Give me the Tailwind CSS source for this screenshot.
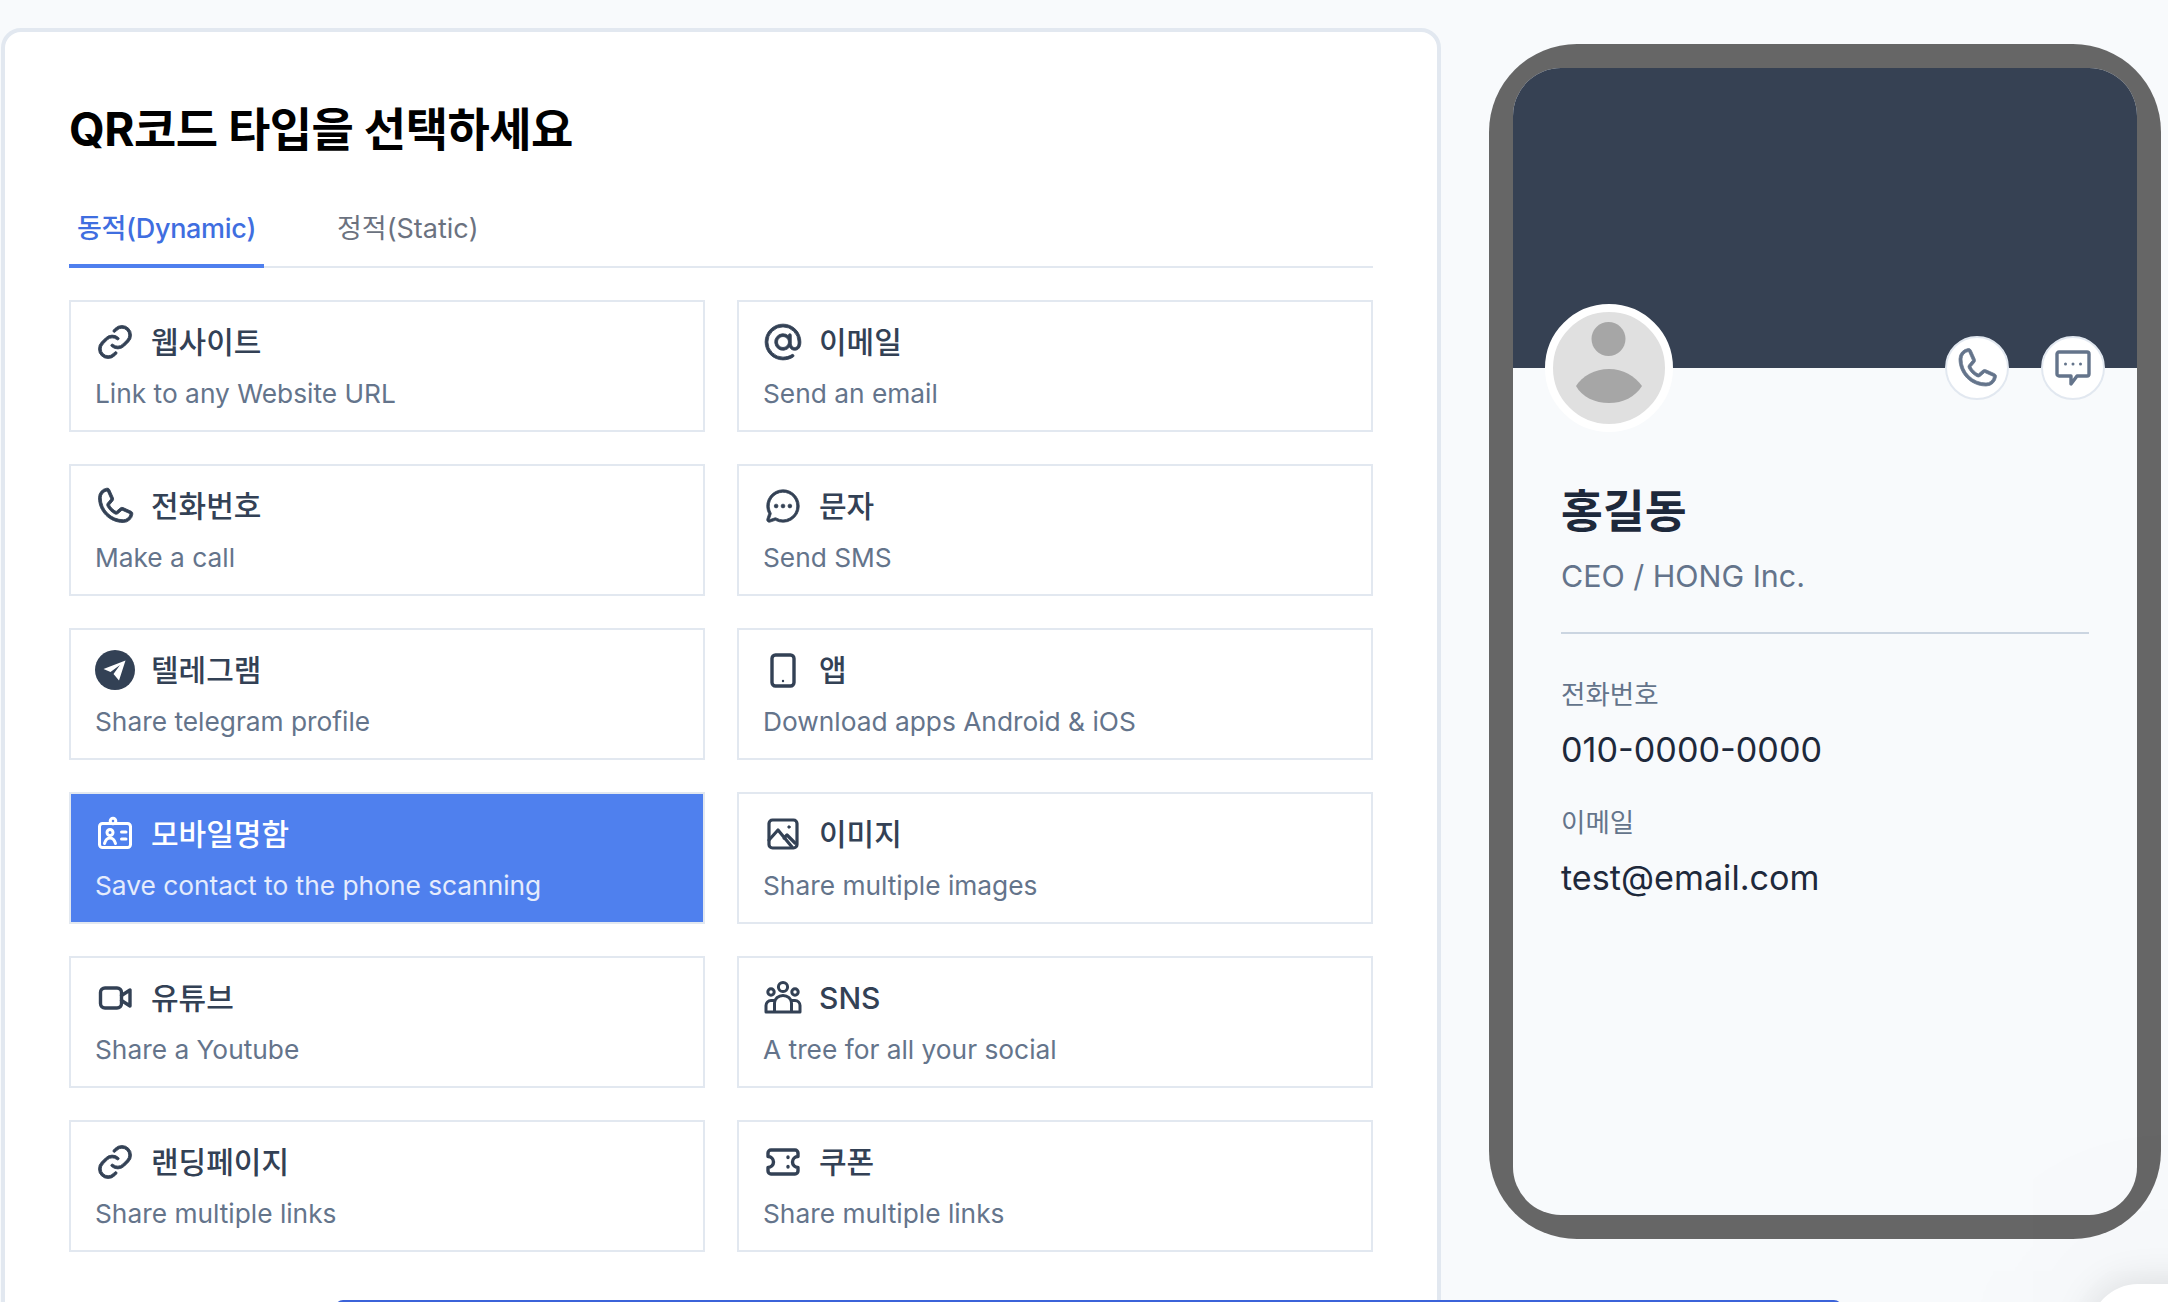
<!DOCTYPE html>
<html lang="ko">
<head>
<meta charset="UTF-8">
<title>QR코드 타입 선택</title>
<script src="https://cdn.jsdelivr.net/npm/@tailwindcss/browser@4"></script>
</head>
<body class="relative h-[1302px] w-[2168px] overflow-hidden bg-[#f8fafc] font-['Inter','Noto_Sans_CJK_KR',sans-serif]">
<div class="flex items-start pl-px">
  <!-- type selector -->
  <main class="mt-7 h-[1400px] w-[1440px] shrink-0 rounded-[20px] border-4 border-[#e2e8f0] bg-white px-16 pt-[69px]">
    <h1 class="text-[46px] leading-[56px] font-bold text-black tracking-[-0.5px]">QR코드 타입을 선택하세요</h1>
    <div class="mt-[41px] flex h-[70px] gap-[65px] border-b-2 border-[#e2e8f0]">
      <button class="-mb-0.5 h-[70px] w-[195px] border-b-4 border-[#4f7fee] px-2 pb-1 text-left text-[27px] font-medium tracking-[-0.3px] whitespace-nowrap text-[#3f6ee0]">동적(Dynamic)</button>
      <button class="-mb-0.5 h-[70px] px-2 pb-2 text-[27px] whitespace-nowrap text-[#6b7280]">정적(Static)</button>
    </div>
    <div class="mt-8 grid grid-cols-2 gap-8">
      <a class="flex h-[132px] flex-col border-2 border-[#e2e8f0] px-6 pt-5">
        <div class="flex h-10 items-center gap-4 text-[30px] font-medium text-[#334155]">
          <svg class="-mx-0.5 size-11" viewBox="0 0 256 256" fill="#334155" stroke="#334155" stroke-width="5"><path d="M137.54,186.36a8,8,0,0,1,0,11.31l-9.94,10A56,56,0,0,1,48.38,128.4L72.5,104.28A56,56,0,0,1,149.31,102a8,8,0,1,1-10.64,12,40,40,0,0,0-54.85,1.63L59.7,139.72a40,40,0,0,0,56.58,56.58l9.94-9.94A8,8,0,0,1,137.54,186.36Zm70.08-138a56.08,56.08,0,0,0-79.22,0l-9.94,9.95a8,8,0,0,0,11.32,11.31l9.94-9.94a40,40,0,0,1,56.58,56.58L172.18,140.4A40,40,0,0,1,117.33,142,8,8,0,1,0,106.69,154a56,56,0,0,0,76.81-2.26l24.12-24.12A56.08,56.08,0,0,0,207.62,48.38Z"/></svg>
          웹사이트
        </div>
        <p class="mt-[14px] text-[26.3px] leading-9 text-[#64748b]">Link to any Website URL</p>
      </a>
      <a class="flex h-[132px] flex-col border-2 border-[#e2e8f0] px-6 pt-5">
        <div class="flex h-10 items-center gap-4 text-[30px] font-medium text-[#334155]">
          <svg class="-mx-0.5 size-11" viewBox="0 0 256 256" fill="#334155" stroke="#334155" stroke-width="5"><path d="M128,24a104,104,0,0,0,0,208c21.51,0,44.1-6.48,60.43-17.33a8,8,0,0,0-8.86-13.33C166,210.38,146.21,216,128,216a88,88,0,1,1,88-88c0,26.45-10.88,32-20,32s-20-5.55-20-32V88a8,8,0,0,0-16,0v4.26a48,48,0,1,0,5.93,65.1c6,12,16.35,18.64,30.07,18.64,22.54,0,36-17.94,36-48A104.11,104.11,0,0,0,128,24Zm0,136a32,32,0,1,1,32-32A32,32,0,0,1,128,160Z"/></svg>
          이메일
        </div>
        <p class="mt-[14px] text-[26.3px] leading-9 text-[#64748b]">Send an email</p>
      </a>
      <a class="flex h-[132px] flex-col border-2 border-[#e2e8f0] px-6 pt-5">
        <div class="flex h-10 items-center gap-4 text-[30px] font-medium text-[#334155]">
          <svg class="-mx-0.5 size-11" viewBox="0 0 256 256" fill="#334155" stroke="#334155" stroke-width="5"><path d="M222.37,158.46l-47.11-21.11-.13-.06a16,16,0,0,0-15.17,1.4,8.12,8.12,0,0,0-.75.56L134.87,160c-15.42-7.49-31.34-23.29-38.83-38.51l20.78-24.71c.2-.25.39-.5.57-.77a16,16,0,0,0,1.32-15.06l0-.12L97.54,33.64a16,16,0,0,0-16.62-9.52A56.26,56.26,0,0,0,32,80c0,79.4,64.6,144,144,144a56.26,56.26,0,0,0,55.88-48.92A16,16,0,0,0,222.37,158.46ZM176,208A128.14,128.14,0,0,1,48,80,40.2,40.2,0,0,1,82.87,40a.61.61,0,0,0,0,.12l21,47L83.2,111.86a6.13,6.13,0,0,0-.57.77,16,16,0,0,0-1,15.7c9.06,18.53,27.73,37.06,46.46,46.11a16,16,0,0,0,15.75-1.14,8.44,8.44,0,0,0,.74-.56L168.89,152l47,21.05h0s.08,0,.11,0A40.21,40.21,0,0,1,176,208Z"/></svg>
          전화번호
        </div>
        <p class="mt-[14px] text-[26.3px] leading-9 text-[#64748b]">Make a call</p>
      </a>
      <a class="flex h-[132px] flex-col border-2 border-[#e2e8f0] px-6 pt-5">
        <div class="flex h-10 items-center gap-4 text-[30px] font-medium text-[#334155]">
          <svg class="size-10" viewBox="0 0 256 256" fill="#334155" stroke="#334155" stroke-width="5"><path d="M140,128a12,12,0,1,1-12-12A12,12,0,0,1,140,128ZM84,116a12,12,0,1,0,12,12A12,12,0,0,0,84,116Zm88,0a12,12,0,1,0,12,12A12,12,0,0,0,172,116Zm60,12A104,104,0,0,1,79.12,219.82L45.07,231.17a16,16,0,0,1-20.24-20.24l11.35-34.05A104,104,0,1,1,232,128Zm-16,0A88,88,0,1,0,51.81,172.06a8,8,0,0,1,.66,6.54L40,216,77.4,203.53a7.85,7.85,0,0,1,2.53-.42,8,8,0,0,1,4,1.08A88,88,0,0,0,216,128Z"/></svg>
          문자
        </div>
        <p class="mt-[14px] text-[26.3px] leading-9 text-[#64748b]">Send SMS</p>
      </a>
      <a class="flex h-[132px] flex-col border-2 border-[#e2e8f0] px-6 pt-5">
        <div class="flex h-10 items-center gap-4 text-[30px] font-medium text-[#334155]">
          <svg class="size-10" viewBox="0 0 40 40"><circle cx="20" cy="20" r="20" fill="#334155"/><path d="M30.5 10.5 8.5 19l7 3 9.5-7-6.5 9 5.5 6.5z" fill="#fff"/></svg>
          텔레그램
        </div>
        <p class="mt-[14px] text-[26.3px] leading-9 text-[#64748b]">Share telegram profile</p>
      </a>
      <a class="flex h-[132px] flex-col border-2 border-[#e2e8f0] px-6 pt-5">
        <div class="flex h-10 items-center gap-4 text-[30px] font-medium text-[#334155]">
          <svg class="size-10" viewBox="0 0 40 40" fill="none" stroke="#334155" stroke-width="3.4"><rect x="9" y="5" width="22" height="31" rx="3.5"/><circle cx="20" cy="31" r="1.2" fill="#334155" stroke="none"/></svg>
          앱
        </div>
        <p class="mt-[14px] text-[26.3px] leading-9 text-[#64748b]">Download apps Android &amp; iOS</p>
      </a>
      <a class="flex h-[132px] flex-col border-2 border-[#e2e8f0] bg-[#4f80ee] px-6 pt-5">
        <div class="flex h-10 items-center gap-4 text-[30px] font-medium text-white">
          <svg class="size-10" viewBox="0 0 40 40" fill="none" stroke="#fff" stroke-width="3" stroke-linejoin="round" stroke-linecap="round"><rect x="4.5" y="9.5" width="31" height="24" rx="3"/><circle cx="18" cy="7" r="2.8" fill="#4f80ee"/><circle cx="15" cy="18.5" r="3"/><path d="M9.5 29.5c1-3.5 3-5.5 5.5-5.5s4.5 2 5.5 5.5M26.5 18h4.5M26.5 25h4.5"/></svg>
          모바일명함
        </div>
        <p class="mt-[14px] text-[26.3px] leading-9 text-white/85">Save contact to the phone scanning</p>
      </a>
      <a class="flex h-[132px] flex-col border-2 border-[#e2e8f0] px-6 pt-5">
        <div class="flex h-10 items-center gap-4 text-[30px] font-medium text-[#334155]">
          <svg class="size-10" viewBox="0 0 40 40" fill="none" stroke="#334155" stroke-width="3.2" stroke-linejoin="round" stroke-linecap="round"><rect x="6" y="6" width="28" height="28" rx="3.5"/><circle cx="26" cy="13" r="1.2" fill="#334155" stroke-width="1"/><path d="M6 26 15 16l14 17M21 24l3-3 8 8"/></svg>
          이미지
        </div>
        <p class="mt-[14px] text-[26.3px] leading-9 text-[#64748b]">Share multiple images</p>
      </a>
      <a class="flex h-[132px] flex-col border-2 border-[#e2e8f0] px-6 pt-5">
        <div class="flex h-10 items-center gap-4 text-[30px] font-medium text-[#334155]">
          <svg class="size-10" viewBox="0 0 40 40" fill="none" stroke="#334155" stroke-width="3.4" stroke-linejoin="round" stroke-linecap="round"><rect x="5.5" y="10" width="21" height="20" rx="4.5"/><path d="M26.5 17.5 35 12v16l-8.5-5.500"/></svg>
          유튜브
        </div>
        <p class="mt-[14px] text-[26.3px] leading-9 text-[#64748b]">Share a Youtube</p>
      </a>
      <a class="flex h-[132px] flex-col border-2 border-[#e2e8f0] px-6 pt-5">
        <div class="flex h-10 items-center gap-4 text-[30px] font-medium text-[#334155]">
          <svg class="size-10" viewBox="0 0 40 40" fill="none" stroke="#334155" stroke-width="3" stroke-linejoin="round"><circle cx="20" cy="9" r="4.6"/><circle cx="8" cy="14" r="3.2"/><circle cx="32" cy="14" r="3.2"/><path d="M11.5 34V25a8.5 7.5 0 0 1 17 0v9zM11.5 34H3v-6.5A5 5 0 0 1 8 22.5h3.5M28.5 34H37v-6.5a5 5 0 0 0-5-5h-3.5"/></svg>
          SNS
        </div>
        <p class="mt-[14px] text-[26.3px] leading-9 text-[#64748b]">A tree for all your social</p>
      </a>
      <a class="flex h-[132px] flex-col border-2 border-[#e2e8f0] px-6 pt-5">
        <div class="flex h-10 items-center gap-4 text-[30px] font-medium text-[#334155]">
          <svg class="-mx-0.5 size-11" viewBox="0 0 256 256" fill="#334155" stroke="#334155" stroke-width="5"><path d="M137.54,186.36a8,8,0,0,1,0,11.31l-9.94,10A56,56,0,0,1,48.38,128.4L72.5,104.28A56,56,0,0,1,149.31,102a8,8,0,1,1-10.64,12,40,40,0,0,0-54.85,1.63L59.7,139.72a40,40,0,0,0,56.58,56.58l9.94-9.94A8,8,0,0,1,137.54,186.36Zm70.08-138a56.08,56.08,0,0,0-79.22,0l-9.94,9.95a8,8,0,0,0,11.32,11.31l9.94-9.94a40,40,0,0,1,56.58,56.58L172.18,140.4A40,40,0,0,1,117.33,142,8,8,0,1,0,106.69,154a56,56,0,0,0,76.81-2.26l24.12-24.12A56.08,56.08,0,0,0,207.62,48.38Z"/></svg>
          랜딩페이지
        </div>
        <p class="mt-[14px] text-[26.3px] leading-9 text-[#64748b]">Share multiple links</p>
      </a>
      <a class="flex h-[132px] flex-col border-2 border-[#e2e8f0] px-6 pt-5">
        <div class="flex h-10 items-center gap-4 text-[30px] font-medium text-[#334155]">
          <svg class="size-10" viewBox="0 0 40 40" fill="none" stroke="#334155" stroke-width="3.4" stroke-linejoin="round" stroke-linecap="round"><path d="M8 8h24a3 3 0 0 1 3 3v3.500a5.500 5.500 0 0 0 0 11V29a3 3 0 0 1-3 3H8a3 3 0 0 1-3-3v-3.500a5.500 5.500 0 0 0 0-11V11a3 3 0 0 1 3-3z"/><path d="M25 15v.5M25 24.500v.5"/></svg>
          쿠폰
        </div>
        <p class="mt-[14px] text-[26.3px] leading-9 text-[#64748b]">Share multiple links</p>
      </a>
    </div>
  </main>

  <!-- phone preview -->
  <aside class="ml-12 mt-11 h-[1195px] w-[672px] shrink-0 rounded-[88px] bg-[#666666] p-6">
    <div class="relative h-full overflow-hidden rounded-[48px] bg-[#f8fafc]">
      <div class="h-[300px] bg-[#364153]"></div>
      <div class="absolute left-8 top-[236px] size-[128px] rounded-full border-8 border-white bg-[#e0e0e0]">
        <svg class="size-full" viewBox="0 0 112 112" fill="#a6a6a6"><circle cx="55.5" cy="27" r="17"/><path d="M23 74c6-10 19-17 33-17s26 7 33 17c-7 11-19 17-33 17s-27-6-33-17z"/></svg>
      </div>
      <div class="absolute right-8 top-[268px] flex gap-8">
        <button class="flex size-16 items-center justify-center rounded-full border-2 border-[#e2e8f0] bg-white">
          <svg class="size-12" viewBox="0 0 256 256" fill="#64748b" stroke="#64748b" stroke-width="4"><path d="M222.37,158.46l-47.11-21.11-.13-.06a16,16,0,0,0-15.17,1.4,8.12,8.12,0,0,0-.75.56L134.87,160c-15.42-7.49-31.34-23.29-38.83-38.51l20.78-24.71c.2-.25.39-.5.57-.77a16,16,0,0,0,1.32-15.06l0-.12L97.54,33.64a16,16,0,0,0-16.62-9.52A56.26,56.26,0,0,0,32,80c0,79.4,64.6,144,144,144a56.26,56.26,0,0,0,55.88-48.92A16,16,0,0,0,222.37,158.46ZM176,208A128.14,128.14,0,0,1,48,80,40.2,40.2,0,0,1,82.87,40a.61.61,0,0,0,0,.12l21,47L83.2,111.86a6.13,6.13,0,0,0-.57.77,16,16,0,0,0-1,15.7c9.06,18.53,27.73,37.06,46.46,46.11a16,16,0,0,0,15.75-1.14,8.44,8.44,0,0,0,.74-.56L168.89,152l47,21.05h0s.08,0,.11,0A40.21,40.21,0,0,1,176,208Z"/></svg>
        </button>
        <button class="flex size-16 items-center justify-center rounded-full border-2 border-[#e2e8f0] bg-white">
          <svg class="size-10" viewBox="0 0 40 40" fill="none" stroke="#64748b" stroke-width="3.4" stroke-linejoin="round"><path d="M6 4h28a2 2 0 0 1 2 2v20a2 2 0 0 1-2 2H24l-6 8v-8H6a2 2 0 0 1-2-2V6a2 2 0 0 1 2-2z"/><circle cx="12.5" cy="16" r="1.5" fill="#64748b" stroke="none"/><circle cx="20" cy="16" r="1.5" fill="#64748b" stroke="none"/><circle cx="27.5" cy="16" r="1.5" fill="#64748b" stroke="none"/></svg>
        </button>
      </div>
      <div class="px-12 pt-[116px]">
        <h2 class="text-[45.5px] leading-[56px] font-bold text-[#1e293b]">홍길동</h2>
        <p class="mt-4 border-b-2 border-[#cbd5e1] pb-9 text-[30.4px] leading-10 text-[#64748b]">CEO / HONG Inc.</p>
        <p class="mt-[42px] text-[26.5px] leading-9 text-[#64748b]">전화번호</p>
        <p class="mt-4 text-[34.2px] leading-[44px] text-[#1e293b]">010-0000-0000</p>
        <p class="mt-8 text-[26.5px] leading-9 text-[#64748b]">이메일</p>
        <p class="mt-4 text-[34.2px] leading-[44px] text-[#1e293b]">test@email.com</p>
      </div>
    </div>
  </aside>
</div>
<div class="absolute left-[335px] top-[1300px] h-8 w-[1507px] rounded-t-lg bg-[#3b63d9]"></div>
<div class="absolute left-[2090px] top-[1284px] h-[160px] w-[160px] rounded-[48px] bg-white shadow-[0_0_40px_rgba(0,0,0,0.12),0_0_260px_rgba(0,0,0,0.08)]"></div>
</body>
</html>
